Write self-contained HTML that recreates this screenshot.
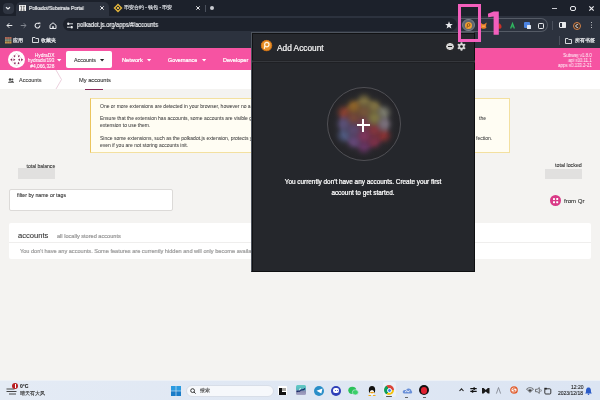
<!DOCTYPE html>
<html><head><meta charset="utf-8">
<style>
*{margin:0;padding:0;box-sizing:border-box}
html,body{width:600px;height:400px;overflow:hidden;background:#f4f3f1;font-family:"Liberation Sans",sans-serif;position:relative}
.a{position:absolute}
.t{position:absolute;white-space:nowrap;line-height:1;-webkit-text-stroke-width:0.1px;will-change:transform}
.w{-webkit-text-stroke-width:0.22px}
svg{position:absolute;overflow:visible}
</style></head><body>

<!-- ============ TAB STRIP ============ -->
<div class="a" style="left:0;top:0;width:600px;height:16px;background:#1c212b"></div>
<div class="a" style="left:2.5px;top:2.5px;width:11px;height:11.5px;border-radius:4px;background:#2f3541"></div>
<svg style="left:0;top:0" width="16" height="16"><path d="M6 7.2 L8 9 L10 7.2" stroke="#e8eaed" stroke-width="1.2" fill="none"/></svg>
<!-- active tab -->
<div class="a" style="left:16px;top:2px;width:93px;height:14px;border-radius:5px 5px 0 0;background:#2c323e"></div>
<div class="a" style="left:18.9px;top:4.7px;width:7.2px;height:6.5px;background:#f2f2f2"></div><svg style="left:18.9px;top:4.7px" width="7.2" height="6.5"><path d="M1.3 1.3 H3.2 M1.3 5.2 H3.2 M4 1.3 H5.9 M4 5.2 H5.9 M2.4 1.3 V5.2 M4.8 1.3 V5.2" stroke="#6a6a6a" stroke-width="0.9" fill="none"/></svg>
<div class="t w" style="left:28.5px;top:6px;font-size:5.5px;color:#e8eaed;transform:scaleX(0.875);transform-origin:0 0">Polkadot/Substrate Portal</div>
<svg style="left:100px;top:6px" width="4" height="4"><path d="M0.3 0.3 L3.7 3.7 M3.7 0.3 L0.3 3.7" stroke="#e8eaed" stroke-width="1"/></svg>
<!-- tab2 -->
<svg style="left:114px;top:4px" width="8" height="8"><path d="M4 0.5 L7.5 4 L4 7.5 L0.5 4 Z" stroke="#e3b53c" stroke-width="1.4" fill="none"/><rect x="3" y="3" width="2" height="2" fill="#e3b53c"/></svg>
<div class="t w" style="left:124px;top:6.2px;font-size:4.65px;color:#d0d3d8">币安合约 - 钱包 - 币安</div>
<svg style="left:195.5px;top:6px" width="4" height="4"><path d="M0.3 0.3 L3.7 3.7 M3.7 0.3 L0.3 3.7" stroke="#e8eaed" stroke-width="1"/></svg>
<div class="a" style="left:205px;top:4.5px;width:1px;height:7px;background:#4a505c"></div>
<div class="a" style="left:210px;top:6px;width:4px;height:4px;border-radius:50%;background:#c8cad0"></div>
<!-- window controls -->
<div class="a" style="left:551.5px;top:7.5px;width:5px;height:1.2px;background:#c8cad0"></div>
<div class="a" style="left:569.5px;top:5.5px;width:6px;height:5px;border:1.2px solid #e8eaed;border-radius:2px"></div>
<svg style="left:589px;top:5.5px" width="5" height="5"><path d="M0.3 0.3 L4.7 4.7 M4.7 0.3 L0.3 4.7" stroke="#e8eaed" stroke-width="1.2"/></svg>

<!-- ============ TOOLBAR ============ -->
<div class="a" style="left:0;top:16px;width:600px;height:32px;background:#2c323e"></div>
<svg style="left:6px;top:22px" width="7" height="7"><path d="M6.3 3.5 H1 M3.3 1.2 L1 3.5 L3.3 5.8" stroke="#e8eaed" stroke-width="1" fill="none"/></svg>
<svg style="left:20px;top:22px" width="7" height="7"><path d="M0.7 3.5 H6 M3.7 1.2 L6 3.5 L3.7 5.8" stroke="#80858e" stroke-width="1" fill="none"/></svg>
<svg style="left:34px;top:22px" width="7" height="7"><path d="M5.9 3.6 A2.4 2.4 0 1 1 5.1 1.8" stroke="#e8eaed" stroke-width="1.1" fill="none"/><path d="M4.1 0.4 L6.3 0.4 L6.3 2.6 Z" fill="#e8eaed"/></svg>
<svg style="left:48.5px;top:21.8px" width="8" height="7"><path d="M1 3.2 L4 0.8 L7 3.2 V6.5 H1 Z" stroke="#e8eaed" stroke-width="1" fill="none"/><rect x="3.2" y="4.2" width="1.6" height="2.3" fill="#e8eaed"/></svg>
<!-- omnibox -->
<div class="a" style="left:63px;top:18.2px;width:394px;height:13.2px;border-radius:6.6px;background:#1d222c"></div>
<svg style="left:66px;top:22px" width="8" height="7"><path d="M1 1.8 H7 M1 5.2 H7" stroke="#e8eaed" stroke-width="0.9"/><rect x="1.5" y="0.6" width="1.6" height="2.4" fill="#e8eaed"/><rect x="4.9" y="4" width="1.6" height="2.4" fill="#e8eaed"/></svg>
<div class="t w" style="left:77px;top:22px;font-size:6.5px;color:#e8eaed;transform:scaleX(0.886);transform-origin:0 0">polkadot.js.org/apps/#/accounts</div>
<svg style="left:444.7px;top:20.8px" width="8" height="8"><path d="M4 0.3 L5 2.9 L7.8 3 L5.6 4.8 L6.4 7.6 L4 6 L1.6 7.6 L2.4 4.8 L0.2 3 L3 2.9 Z" fill="#e8eaed"/></svg>
<!-- extensions pill -->
<div class="a" style="left:459px;top:18.2px;width:89px;height:13.6px;border-radius:0 7px 7px 0;border:1px solid #555b66;border-left:none"></div>
<div class="a" style="left:462.4px;top:18.7px;width:12.6px;height:12.6px;border-radius:50%;background:#5e6570;border:1px solid #7a808a"></div>
<div class="a" style="left:465.2px;top:21.5px;width:7px;height:7px;border-radius:50%;background:#f0a232"></div>
<svg style="left:465.2px;top:21.5px" width="7" height="7"><circle cx="3.6" cy="3" r="1.4" stroke="#8a4a10" stroke-width="0.9" fill="none"/><path d="M2.3 3.8 L2 5.8" stroke="#8a4a10" stroke-width="0.9"/></svg>
<svg style="left:480px;top:22px" width="7" height="7"><path d="M0.3 0.5 L2.8 2.2 H4.2 L6.7 0.5 L6 4 L6.4 6 L4.3 6.8 H2.7 L0.6 6 L1 4 Z" fill="#e8802a"/><path d="M2.2 4.2 H4.8" stroke="#f8c880" stroke-width="0.8"/></svg>
<svg style="left:496.5px;top:22.5px" width="5" height="6"><path d="M2.5 0.3 C4 1.5 4.8 3 4.5 4.3 C4.2 5.5 3.3 5.8 2.5 5.8 C1.7 5.8 0.8 5.5 0.5 4.3 C0.2 3 1 1.5 2.5 0.3 Z" fill="#c83028"/></svg>
<svg style="left:509.5px;top:22.5px" width="5" height="6"><path d="M0.6 5.6 L2.5 0.6 L4.4 5.6" stroke="#30b860" stroke-width="1.3" fill="none"/><path d="M1.5 3.8 H3.5" stroke="#30b860" stroke-width="0.9"/></svg>
<div class="a" style="left:524px;top:22.4px;width:6.4px;height:6px;background:#4a82e0;border-radius:1px"></div>
<div class="a" style="left:527.2px;top:25.4px;width:3.4px;height:3.2px;background:#dfe6f0;border-radius:0.5px"></div>
<div class="a" style="left:537.6px;top:22.6px;width:6.4px;height:6px;border:1.2px solid #e8eaed;border-radius:1.2px"></div>
<div class="a" style="left:552px;top:20.5px;width:1px;height:9px;background:#4a505c"></div>
<div class="a" style="left:559px;top:22.4px;width:6.6px;height:6px;border:1.1px solid #e8eaed;border-radius:1px"></div>
<div class="a" style="left:562.3px;top:22.4px;width:3.3px;height:6px;background:#e8eaed;border-radius:0 1px 1px 0"></div>
<div class="a" style="left:572.5px;top:21.5px;width:8px;height:8px;border-radius:50%;background:#3a2e28;border:1.2px solid #d4844a"></div>
<svg style="left:574.5px;top:23.5px" width="4" height="4"><path d="M3.2 0.8 A1.5 1.5 0 1 0 3.2 3.2" stroke="#e8eaed" stroke-width="0.9" fill="none"/></svg>
<div class="a" style="left:590.5px;top:22px;width:1.2px;height:1.2px;background:#e8eaed;border-radius:50%;box-shadow:0 2.5px 0 #e8eaed,0 5px 0 #e8eaed"></div>
<!-- bookmarks -->
<svg style="left:5px;top:36.5px" width="6.5" height="6.5"><rect x="0" y="0" width="6.5" height="2.1" fill="#b06a58"/><rect x="0" y="2.2" width="6.5" height="2.1" fill="#8a9a80"/><rect x="0" y="4.4" width="6.5" height="2.1" fill="#c89a50"/><path d="M2.1 0 V6.5 M4.3 0 V6.5" stroke="#2c323e" stroke-width="0.3"/></svg>
<div class="t w" style="left:13px;top:37.5px;font-size:5px;color:#e8eaed">应用</div>
<svg style="left:32px;top:37px" width="7" height="6"><path d="M0.5 0.5 H3 L3.8 1.5 H6.5 V5.5 H0.5 Z" stroke="#e8eaed" stroke-width="0.9" fill="none"/></svg>
<div class="t w" style="left:41px;top:37.5px;font-size:5px;color:#e8eaed">收藏夹</div>
<div class="a" style="left:558.5px;top:36px;width:1px;height:9px;background:#4a505c"></div>
<svg style="left:565px;top:37.5px" width="7" height="6"><path d="M0.5 0.5 H3 L3.8 1.5 H6.5 V5.5 H0.5 Z" stroke="#e8eaed" stroke-width="0.9" fill="none"/></svg>
<div class="t w" style="left:575px;top:37.5px;font-size:5px;color:#e8eaed">所有书签</div>

<!-- ============ PINK HEADER ============ -->
<div class="a" style="left:0;top:48px;width:600px;height:22.4px;background:#f653a2"></div>
<div class="a" style="left:8.1px;top:50.8px;width:17px;height:17px;border-radius:50%;background:#fff"></div>
<svg style="left:8.1px;top:50.8px" width="17" height="17">
 <path d="M8.7 2.3 L14.7 8.7 L8.7 15 L2.3 8.7 Z" stroke="#e8b8d0" stroke-width="0.6" fill="none"/>
 <g fill="#7a1548">
  <path d="M5.6 4.2 L7.6 4.8 L6.6 6.6 Z"/><path d="M11.8 4.2 L9.8 4.8 L10.8 6.6 Z"/>
  <path d="M2.3 8.7 L4.2 7.4 L4.2 10 Z"/><path d="M7.4 8.7 L5.5 7.4 L5.5 10 Z"/>
  <path d="M10 8.7 L11.9 7.4 L11.9 10 Z"/><path d="M15.1 8.7 L13.2 7.4 L13.2 10 Z"/>
  <path d="M5.9 13.2 L7.9 12.6 L6.9 10.8 Z"/><path d="M11.5 13.2 L9.5 12.6 L10.5 10.8 Z"/>
 </g>
</svg>
<div class="t w" style="left:14px;top:53.3px;width:40.5px;text-align:right;font-size:4.85px;line-height:5.25px;color:#fff;-webkit-text-stroke-width:0.08px">HydraDX<br>hydradx/193<br>#4,066,328</div>
<svg style="left:57px;top:59px" width="5" height="3"><path d="M0 0 H4.4 L2.2 2.4 Z" fill="#fff"/></svg>
<div class="a" style="left:66.3px;top:51px;width:46px;height:16.7px;border-radius:2px;background:#fff"></div>
<div class="t" style="left:74px;top:58px;font-size:5.35px;color:#333">Accounts</div>
<svg style="left:100px;top:59.3px" width="5" height="3"><path d="M0 0 H4.2 L2.1 2.4 Z" fill="#222"/></svg>
<div class="t w" style="left:121.7px;top:58px;font-size:5.7px;color:#fff">Network</div>
<svg style="left:146.5px;top:59.3px" width="5" height="3"><path d="M0 0 H4.2 L2.1 2.4 Z" fill="#fff"/></svg>
<div class="t w" style="left:167.7px;top:58px;font-size:5.35px;color:#fff">Governance</div>
<svg style="left:201.5px;top:59.3px" width="5" height="3"><path d="M0 0 H4.2 L2.1 2.4 Z" fill="#fff"/></svg>
<div class="t w" style="left:222.7px;top:58px;font-size:5.55px;color:#fff">Developer</div>
<div class="t w" style="left:520px;top:53.8px;width:71.7px;text-align:right;font-size:4.5px;line-height:4.8px;color:#fff;-webkit-text-stroke-width:0px;transform:scaleX(0.97);transform-origin:100% 0">Subway v1.8.0<br>api v10.11.1<br>apps v0.133.2-21</div>

<!-- ============ SUB NAV ============ -->
<div class="a" style="left:0;top:70px;width:600px;height:18.7px;background:#fff"></div>
<svg style="left:8px;top:78px" width="6" height="5"><circle cx="2" cy="1.5" r="1.2" fill="#444"/><circle cx="4.3" cy="1.5" r="1.1" fill="#444"/><path d="M0 4.8 C0 3 4 3 4 4.8 Z M3 3.3 C4 2.8 6 3.2 6 4.8 H4.4 Z" fill="#444"/></svg>
<div class="t" style="left:18.6px;top:77.8px;font-size:5.5px;color:#444">Accounts</div>
<svg style="left:55px;top:70px" width="8" height="19"><path d="M1 0 L6.5 9.5 L1 19" stroke="#e6c4d4" stroke-width="0.8" fill="none"/></svg>
<div class="t" style="left:78.8px;top:78.1px;font-size:5.7px;color:#333">My accounts</div>
<div class="a" style="left:85px;top:88.7px;width:17.6px;height:1.2px;background:#8a2a5a"></div>

<!-- ============ WARNING ============ -->
<div class="a" style="left:90px;top:98px;width:419.5px;height:54.5px;background:#fffdf3;border:1px solid #f3e0a0;border-left:1.5px solid #ebc55e"></div>
<div class="t" style="left:100px;top:104px;font-size:5px;color:#404040;-webkit-text-stroke-width:0.04px">One or more extensions are detected in your browser, however no accounts are injected.</div>
<div class="t" style="left:100px;top:116.3px;font-size:5px;color:#404040;-webkit-text-stroke-width:0.04px">Ensure that the extension has accounts, some accounts are visible globally and available for this chain and that you gave the</div>
<div class="t" style="left:100px;top:123px;font-size:5px;color:#404040;-webkit-text-stroke-width:0.04px">extension to use them.</div>
<div class="t" style="left:100px;top:135.6px;font-size:5px;color:#404040;-webkit-text-stroke-width:0.04px">Since some extensions, such as the polkadot.js extension, protects you against all sites connecting to it, you will need to explicitly</div>
<div class="t" style="left:100px;top:142.7px;font-size:5px;color:#404040;-webkit-text-stroke-width:0.04px">even if you are not storing accounts init.</div>
<div class="t" style="left:478.5px;top:116.3px;font-size:5px;color:#404040;-webkit-text-stroke-width:0.04px">the</div>
<div class="t" style="left:476px;top:135.6px;font-size:5px;color:#404040;-webkit-text-stroke-width:0.04px">fection.</div>

<!-- ============ BALANCES ============ -->
<div class="t" style="left:20px;top:164px;width:35.2px;text-align:right;font-size:5.05px;color:#333">total balance</div>
<div class="a" style="left:18.4px;top:168.2px;width:36.2px;height:10.4px;background:#e1e0df"></div>
<div class="t" style="left:540px;top:163.3px;width:41.8px;text-align:right;font-size:5.3px;color:#333">total locked</div>
<div class="a" style="left:545px;top:168.5px;width:37px;height:10px;background:#e1e0df"></div>
<div class="a" style="left:549.9px;top:195.1px;width:11.2px;height:11.2px;border-radius:50%;background:#d93a87"></div>
<div class="a" style="left:552.7px;top:197.9px;width:2.4px;height:2.4px;background:#fff;border-radius:0.4px;box-shadow:3.2px 0 0 #fff,0 3.2px 0 #fff,3.2px 3.2px 0 #fff"></div>
<div class="t" style="left:563.6px;top:197.5px;font-size:6.05px;color:#333">from Qr</div>

<!-- ============ FILTER ============ -->
<div class="a" style="left:8.75px;top:189.4px;width:164.5px;height:22px;background:#fff;border:1px solid #dcdad8;border-radius:2px"></div>
<div class="t" style="left:17px;top:193.2px;font-size:5.25px;color:#333">filter by name or tags</div>

<!-- ============ ACCOUNTS TABLE ============ -->
<div class="a" style="left:8.7px;top:223.2px;width:582.5px;height:36px;background:#fff;border-radius:2px"></div>
<div class="t" style="left:18px;top:232.2px;font-size:7.6px;color:#333">accounts</div>
<div class="t w" style="left:57px;top:233.9px;font-size:5.6px;color:#9a9a9a">all locally stored accounts</div>
<div class="a" style="left:8.7px;top:242px;width:582.5px;height:1px;background:#efeeed"></div>
<div class="t w" style="left:19.5px;top:248.6px;font-size:5.6px;color:#a0a0a0">You don't have any accounts. Some features are currently hidden and will only become available once you have accounts.</div>

<!-- ============ POPUP ============ -->
<div class="a" style="left:250.5px;top:32px;width:224.5px;height:240px;background:#25272c;border:1px solid #4e545e;border-bottom-color:#0e0f11;border-right-color:#0e0f11;box-shadow:inset 1px 1px 0 #111214"></div>
<div class="a" style="left:252px;top:59.5px;width:222.5px;height:3px;background:#1f2024;border-top:1px solid #222327"></div><div class="a" style="left:252px;top:60.5px;width:222.5px;height:1.2px;background:#35373c"></div>
<div class="a" style="left:261px;top:40.2px;width:11.2px;height:11.2px;border-radius:50%;background:#e8912a"></div>
<svg style="left:261px;top:40.2px" width="11.2" height="11.2"><circle cx="5.6" cy="5.6" r="5.2" stroke="#c86a10" stroke-width="0.8" fill="none"/><circle cx="5.8" cy="4.6" r="2.2" stroke="#fff4e0" stroke-width="1.2" fill="none"/><path d="M3.8 5.8 L3.3 8.8" stroke="#fff4e0" stroke-width="1.2"/></svg>
<div class="t w" style="left:277.3px;top:43.8px;font-size:8.3px;color:#f4f4f4">Add Account</div>
<div class="a" style="left:445.2px;top:41.8px;width:9.6px;height:9.6px;border-radius:50%;background:#d4d4d4;border:0.9px solid #0c0c0e"></div>
<div class="a" style="left:447.7px;top:46px;width:4.6px;height:1.3px;background:#1a1a1a"></div>
<svg style="left:456.7px;top:42.2px" width="9" height="9"><g fill="#d8d8d8"><circle cx="4.5" cy="4.5" r="3.1"/><rect x="3.6" y="0.2" width="1.8" height="8.6" rx="0.4"/><rect x="3.6" y="0.2" width="1.8" height="8.6" rx="0.4" transform="rotate(60 4.5 4.5)"/><rect x="3.6" y="0.2" width="1.8" height="8.6" rx="0.4" transform="rotate(120 4.5 4.5)"/></g><circle cx="4.5" cy="4.5" r="1.3" fill="#111"/></svg>
<!-- identicon -->
<svg style="left:326.6px;top:86.8px" width="74" height="74"><defs><filter id="bl" x="-20%" y="-20%" width="140%" height="140%"><feGaussianBlur stdDeviation="2.8"/></filter><clipPath id="cp"><circle cx="37" cy="37" r="36.5"/></clipPath><radialGradient id="vg"><stop offset="0.62" stop-color="#222226" stop-opacity="0"/><stop offset="1" stop-color="#222226" stop-opacity="0.85"/></radialGradient></defs><circle cx="37" cy="37" r="36.5" fill="#29292d"/><g clip-path="url(#cp)"><g filter="url(#bl)"><circle cx="37.0" cy="13.0" r="6" fill-opacity="0.6" fill="#b8a050"/><circle cx="37.0" cy="25.0" r="6" fill-opacity="0.6" fill="#a87040"/><circle cx="26.6" cy="19.0" r="6" fill-opacity="0.6" fill="#d08a2a"/><circle cx="16.2" cy="25.0" r="6" fill-opacity="0.6" fill="#c85030"/><circle cx="26.6" cy="31.0" r="6" fill-opacity="0.6" fill="#a85a40"/><circle cx="16.2" cy="37.0" r="6" fill-opacity="0.6" fill="#7a6aa8"/><circle cx="16.2" cy="49.0" r="6" fill-opacity="0.6" fill="#6a7ab8"/><circle cx="26.6" cy="43.0" r="6" fill-opacity="0.6" fill="#7a5a98"/><circle cx="26.6" cy="55.0" r="6" fill-opacity="0.6" fill="#8a5aa8"/><circle cx="37.0" cy="61.0" r="6" fill-opacity="0.6" fill="#903a88"/><circle cx="37.0" cy="49.0" r="6" fill-opacity="0.6" fill="#b83a7a"/><circle cx="47.4" cy="55.0" r="6" fill-opacity="0.6" fill="#b03058"/><circle cx="57.8" cy="49.0" r="6" fill-opacity="0.6" fill="#c83838"/><circle cx="47.4" cy="43.0" r="6" fill-opacity="0.6" fill="#c03a48"/><circle cx="57.8" cy="37.0" r="6" fill-opacity="0.6" fill="#b0a0b0"/><circle cx="57.8" cy="25.0" r="6" fill-opacity="0.6" fill="#b0b098"/><circle cx="47.4" cy="31.0" r="6" fill-opacity="0.6" fill="#b8a850"/><circle cx="47.4" cy="19.0" r="6" fill-opacity="0.6" fill="#b8a050"/><circle cx="37.0" cy="37.0" r="6" fill-opacity="0.6" fill="#b04a6a"/></g><circle cx="37" cy="37" r="37" fill="url(#vg)"/></g><circle cx="37" cy="37" r="36.5" fill="none" stroke="#5a5b60" stroke-width="0.8"/></svg>
<div class="a" style="left:356.6px;top:124.2px;width:13px;height:2px;background:#fff"></div>
<div class="a" style="left:362.1px;top:118.7px;width:2px;height:13px;background:#fff"></div>
<div class="t w" style="left:251px;top:177px;width:224px;text-align:center;font-size:6.4px;line-height:10.6px;color:#fff">You currently don't have any accounts. Create your first<br>account to get started.</div>

<!-- ============ ANNOTATION ============ -->
<div class="a" style="left:458px;top:4px;width:23.3px;height:37.8px;border:3px solid #f35fbd"></div>
<svg style="left:486px;top:10px" width="16" height="26"><path d="M7.6 1.6 H12.8 V24.7 H7.6 V6.5 L2.2 7.2 L1.9 3.7 Z" fill="#f35fbd"/></svg>

<!-- ============ TASKBAR ============ -->
<div class="a" style="left:0;top:380.3px;width:600px;height:19.7px;background:linear-gradient(90deg,#e4ebf5,#dfe7f3 50%,#dce5f3);border-top:1px solid #edf1f6"></div>
<svg style="left:6px;top:387px" width="12" height="8"><path d="M0.5 2 H8.5 M0.5 4.5 H10.5 M3 7 H10" stroke="#333" stroke-width="0.9"/></svg>
<div class="a" style="left:12px;top:383px;width:6px;height:6px;border-radius:50%;background:#b81e22"></div>
<div class="a" style="left:14.5px;top:384.3px;width:1px;height:3.4px;background:#fff"></div>
<div class="t" style="left:20px;top:383.7px;font-size:5px;font-weight:bold;color:#222">0°C</div>
<div class="t" style="left:20px;top:391.3px;font-size:5px;color:#333">晴天有大风</div>
<!-- start -->
<svg style="left:171px;top:385.5px" width="10" height="10"><rect x="0" y="0" width="4.7" height="4.7" fill="#2a9ae0"/><rect x="5.3" y="0" width="4.7" height="4.7" fill="#2a9ae0"/><rect x="0" y="5.3" width="4.7" height="4.7" fill="#1a7cc8"/><rect x="5.3" y="5.3" width="4.7" height="4.7" fill="#1a7cc8"/></svg>
<!-- search -->
<div class="a" style="left:185.8px;top:384.5px;width:88px;height:12px;border-radius:6px;background:#f6f8fb;border:1px solid #d8dee8"></div>
<svg style="left:190px;top:387.5px" width="6" height="6"><circle cx="2.6" cy="2.6" r="1.9" stroke="#222" stroke-width="0.9" fill="none"/><path d="M4 4 L5.6 5.6" stroke="#222" stroke-width="0.9"/></svg>
<div class="t" style="left:200px;top:388px;font-size:5px;color:#444">搜索</div>
<!-- taskbar icons -->
<div class="a" style="left:277.6px;top:385.9px;width:9.6px;height:9.6px;border-radius:1px;background:#fff"></div>
<div class="a" style="left:278.6px;top:388px;width:3px;height:6.5px;background:#111"></div>
<div class="a" style="left:278.6px;top:391.5px;width:7.4px;height:3px;background:#111"></div>
<div class="a" style="left:282.2px;top:388px;width:3.6px;height:3.2px;background:#a8a6a2"></div>
<div class="a" style="left:295.9px;top:385.3px;width:9.8px;height:9.6px;border-radius:1.5px;background:linear-gradient(#62cbc4 0,#5ab8c0 45%,#8a8cb0 60%,#a6a4c4 100%)"></div>
<svg style="left:296px;top:387px" width="10" height="7"><path d="M0.8 5 C2 3 3 5.5 4.5 3.5 C5.5 2 6.5 4 9 1.5" stroke="#1a2a6a" stroke-width="1.2" fill="none"/><path d="M3 2.5 L5 1.5" stroke="#fff" stroke-width="0.8"/></svg>
<div class="a" style="left:313.7px;top:385.7px;width:10px;height:10px;border-radius:50%;background:#2a8ec8"></div>
<svg style="left:315.5px;top:388px" width="7" height="6"><path d="M0.5 2.8 L6.5 0.5 L5.3 5.5 Z" fill="#fff"/></svg>
<div class="a" style="left:331.3px;top:385.7px;width:10px;height:10px;border-radius:50%;background:#2f3fb8"></div>
<div class="a" style="left:333.3px;top:388.3px;width:6px;height:4.4px;border-radius:2.2px;background:#fff"></div><div class="a" style="left:334.6px;top:389.6px;width:1.2px;height:1.4px;border-radius:50%;background:#2f3fb8;box-shadow:2.2px 0 0 #2f3fb8"></div>
<svg style="left:347.5px;top:385.5px" width="11" height="10"><ellipse cx="4.3" cy="4.3" rx="4" ry="3.6" fill="#2ac25a"/><ellipse cx="7.3" cy="6.3" rx="3" ry="2.6" fill="#3ad06a" stroke="#dde6f1" stroke-width="0.6"/></svg>
<svg style="left:367px;top:384.5px" width="10" height="12"><ellipse cx="5" cy="5" rx="3.2" ry="4" fill="#111"/><ellipse cx="5" cy="7.5" rx="2.2" ry="2.5" fill="#fff"/><path d="M2 7.5 L5 6.8 L8 7.5 L5 8.6 Z" fill="#e8a020"/><path d="M1.5 10.5 H4 M6 10.5 H8.5" stroke="#f0b020" stroke-width="1"/></svg>
<div class="a" style="left:382.5px;top:382px;width:13.3px;height:15px;border-radius:2px;background:#e9eff7"></div>
<div class="a" style="left:384.2px;top:385px;width:10px;height:10px;border-radius:50%;background:conic-gradient(from -30deg,#db4437 0 120deg,#f4c20d 120deg 240deg,#0f9d58 240deg 360deg)"></div>
<div class="a" style="left:386.7px;top:387.5px;width:5px;height:5px;border-radius:50%;background:#4285f4;border:0.8px solid #fff"></div>
<div class="a" style="left:385.5px;top:396.3px;width:6.5px;height:1.2px;border-radius:1px;background:#555"></div>
<svg style="left:401.5px;top:386.5px" width="11" height="8"><path d="M1 6 C0 4 2 2.5 4 3.2 C5 0.5 9.5 1 9.5 4 C10.5 4.5 10.5 6.5 9 6.5 H2 Z" fill="#6a90d8"/><path d="M3 5 L5 3.5 L6 5 L8 3.5" stroke="#fff" stroke-width="0.8" fill="none"/></svg>
<div class="a" style="left:404.7px;top:396.5px;width:3px;height:1.1px;background:#666"></div>
<div class="a" style="left:419px;top:385.2px;width:10px;height:10px;border-radius:50%;background:#111"></div>
<div class="a" style="left:420.6px;top:386.8px;width:6.8px;height:6.8px;border-radius:50%;background:#e02030"></div>
<div class="a" style="left:422.5px;top:396.5px;width:3px;height:1.1px;background:#666"></div>
<!-- tray -->
<svg style="left:458.5px;top:388px" width="5" height="3.5"><path d="M0.5 3 L2.5 0.8 L4.5 3" stroke="#222" stroke-width="1.1" fill="none"/></svg>
<svg style="left:469.5px;top:387.3px" width="7" height="6"><path d="M0.3 1.6 H6.7 M0.3 4.4 H6.7" stroke="#111" stroke-width="1.1"/><rect x="3.4" y="0.3" width="1.5" height="2.6" fill="#111"/><rect x="1.8" y="3.1" width="1.5" height="2.6" fill="#111"/></svg>
<svg style="left:481.5px;top:387.8px" width="7.5" height="5.5"><path d="M0 0 H1.6 L3.75 2 L5.9 0 H7.5 V5.5 H5.9 L3.75 3.5 L1.6 5.5 H0 Z" fill="#1a1a1a"/></svg>
<svg style="left:495.5px;top:387px" width="5" height="7"><path d="M0.4 6.6 L2.5 0.5 L4.6 6.6" stroke="#7a7e88" stroke-width="0.8" fill="none"/></svg>
<svg style="left:509.5px;top:386px" width="8" height="8"><circle cx="4" cy="4" r="3.2" fill="#fff" stroke="#e05a2a" stroke-width="1.3"/><path d="M5.6 2.6 C4.5 1.8 2.6 2.2 2.8 3.4 C3 4.4 5.2 3.8 5.3 5 C5.4 6.2 3.4 6.3 2.4 5.6" stroke="#e05a2a" stroke-width="1" fill="none"/></svg>
<svg style="left:525.5px;top:387px" width="8" height="6"><path d="M0.5 2 C2.5 0.2 5.5 0.2 7.5 2 L4 5.5 Z" fill="none" stroke="#444" stroke-width="0.7"/><path d="M2 3 C3 2 5 2 6 3 L4 5 Z" fill="#444"/></svg>
<svg style="left:534.5px;top:387px" width="8" height="7"><path d="M0.5 2.3 H2.2 L4.3 0.6 V6.4 L2.2 4.7 H0.5 Z" fill="none" stroke="#444" stroke-width="0.7"/><path d="M5.6 2.3 C6.4 3 6.4 4 5.6 4.7" stroke="#444" stroke-width="0.7" fill="none"/></svg>
<svg style="left:543.5px;top:386.5px" width="8" height="8"><rect x="0.8" y="1.8" width="6" height="5.2" rx="1" fill="none" stroke="#222" stroke-width="0.9"/><rect x="0.3" y="0.8" width="2.5" height="1.6" fill="#222"/></svg>
<div class="t" style="left:571px;top:385px;font-size:5px;color:#222">12:20</div>
<div class="t" style="left:557.5px;top:391px;font-size:5px;color:#222">2023/12/18</div>
<svg style="left:585px;top:386.5px" width="7" height="8"><path d="M3.5 0.5 C6 0.5 6 3 6 5 L6.8 6.5 H0.2 L1 5 C1 3 1 0.5 3.5 0.5 Z" fill="#2a5bc8"/><circle cx="3.5" cy="7.2" r="0.8" fill="#2a5bc8"/></svg>
</body></html>
